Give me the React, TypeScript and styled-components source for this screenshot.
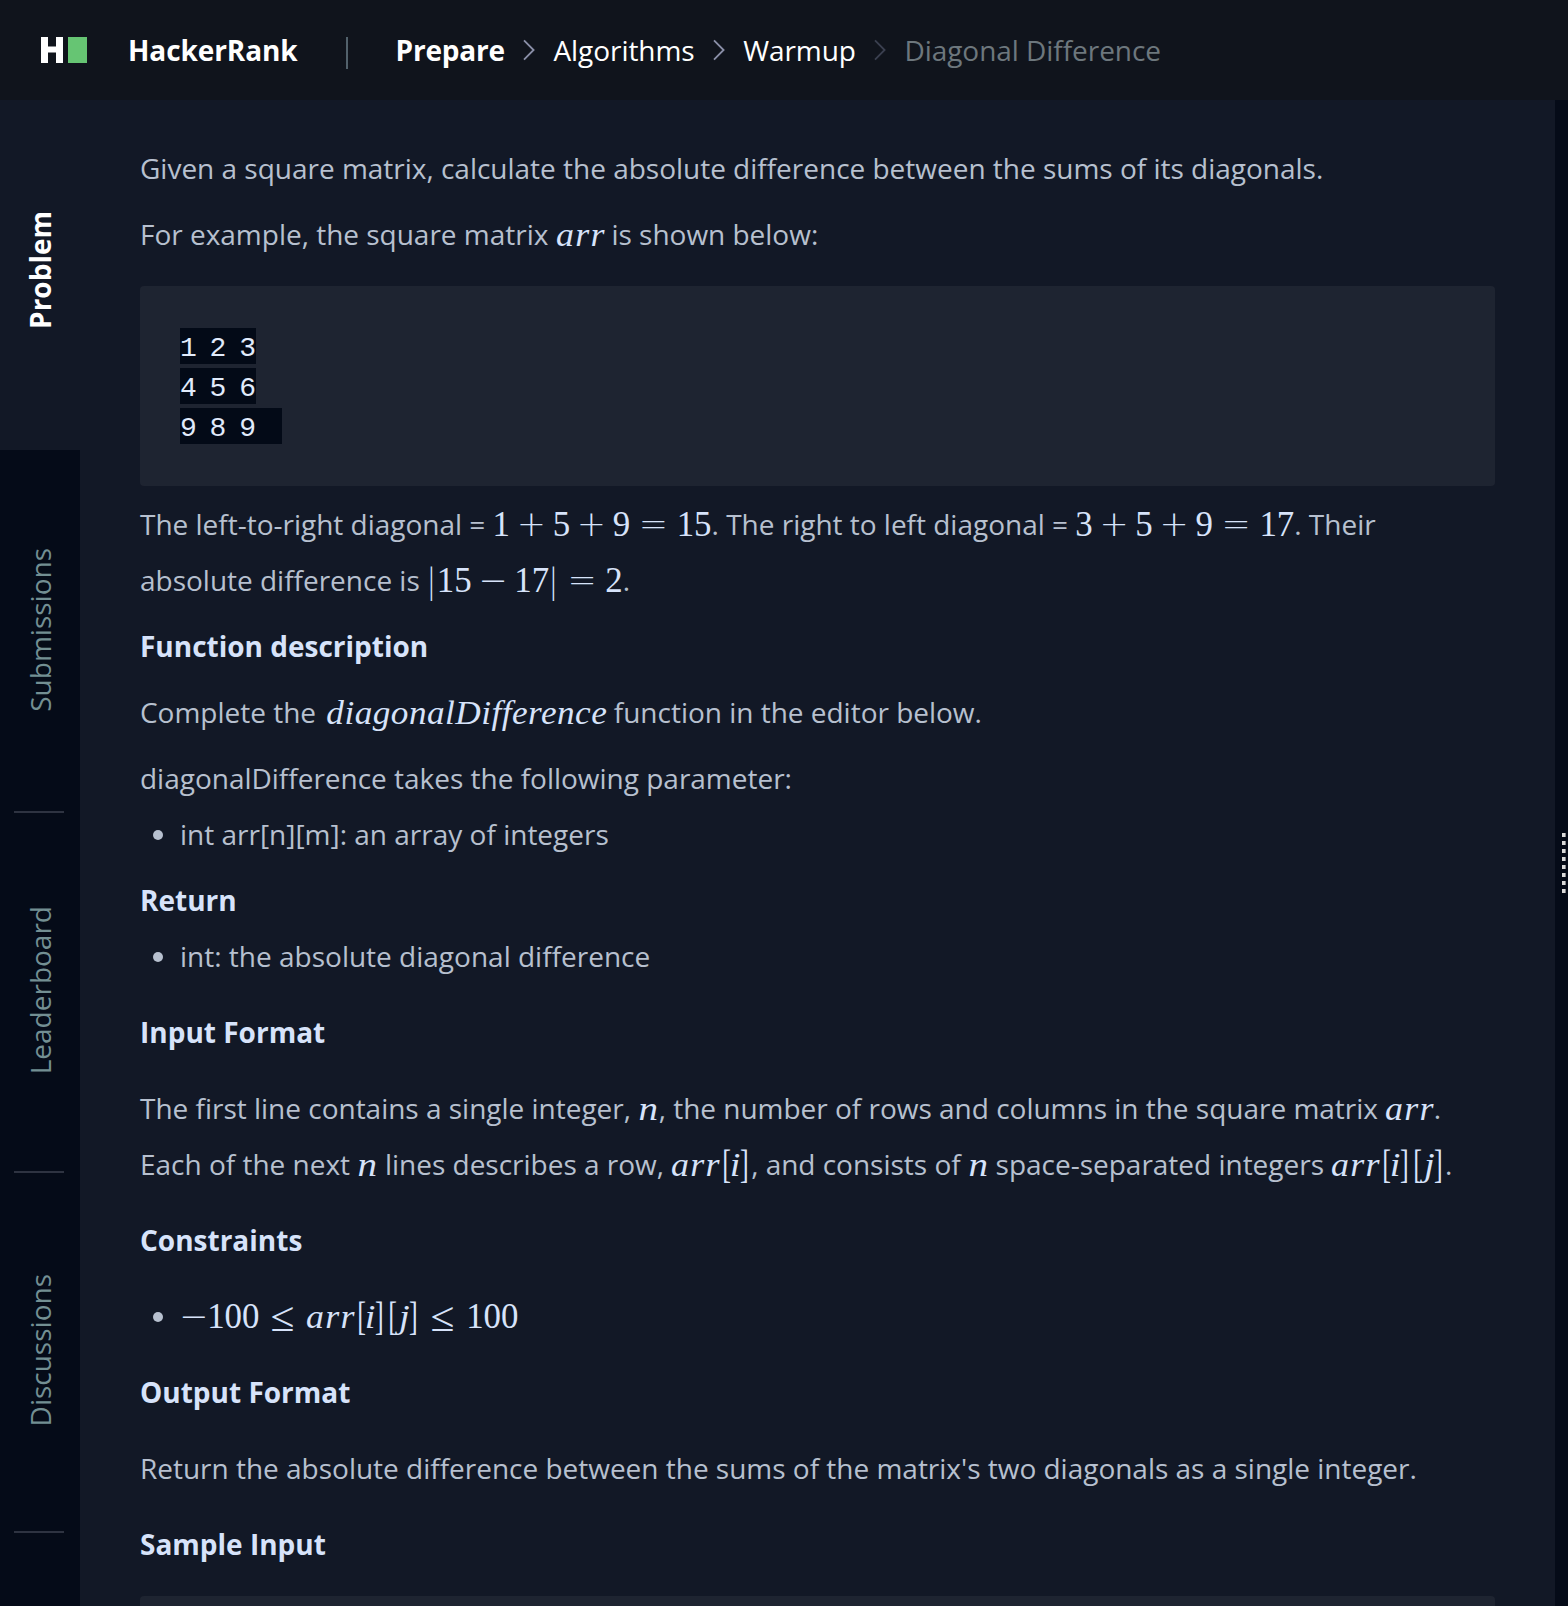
import React from "react";
import styled, { createGlobalStyle, css } from "styled-components";

const GlobalStyle = createGlobalStyle`
  html, body {
    margin: 0;
    padding: 0;
    background: #121826;
  }
  body {
    font-family: "Open Sans", "Noto Sans", sans-serif;
    font-size: 28px;
    color: #b7c0cf;
  }
`;

const Page = styled.div`
  display: flex;
  flex-direction: column;
  height: 1606px;
  overflow: hidden;
`;

const Header = styled.header`
  display: flex;
  align-items: center;
  height: 100px;
  flex: none;
  padding-left: 41px;
  background: #10141c;
  color: #fff;
`;

const Logo = styled.svg`
  display: block;
  width: 46px;
  height: 26px;
`;

const Brand = styled.span`
  margin-left: 41px;
  line-height: 40px;
  font-weight: 700;
  letter-spacing: -0.1px;
`;

const Divider = styled.span`
  width: 2px;
  height: 32px;
  margin: 6px 48px 0 48px;
  background: #52616b;
`;

const Crumbs = styled.nav`
  display: flex;
  align-items: center;
  line-height: 40px;
`;

const Crumb = styled.span<{ $strong?: boolean; $dim?: boolean }>`
  font-weight: ${(p) => (p.$strong ? 700 : 400)};
  letter-spacing: ${(p) => (p.$strong ? -0.2 : -0.05)}px;
  color: ${(p) => (p.$dim ? "#6d777d" : "#fff")};
`;

const Chevron = styled.svg<{ $dim?: boolean }>`
  display: block;
  width: 12px;
  height: 22px;
  margin: 0 18.5px 0 18px;
  fill: none;
  stroke: ${(p) => (p.$dim ? "#3b4050" : "#8b90a8")};
  stroke-width: 1.8;
`;

const Body = styled.div`
  display: flex;
  flex: 1;
  min-height: 0;
`;

const Sidebar = styled.aside`
  display: flex;
  flex-direction: column;
  flex: none;
  width: 80px;
  background: #050b18;
`;

const Tab = styled.div<{ $active?: boolean; $height: number; $shift: number }>`
  display: flex;
  align-items: center;
  justify-content: center;
  flex: none;
  box-sizing: border-box;
  height: ${(p) => p.$height}px;
  padding-bottom: ${(p) => p.$shift}px;
  background: ${(p) => (p.$active ? "#121826" : "transparent")};
  color: ${(p) => (p.$active ? "#fff" : "#738f93")};
  font-weight: ${(p) => (p.$active ? 700 : 400)};
`;

const TabLabel = styled.span`
  writing-mode: vertical-rl;
  transform: rotate(180deg);
  line-height: 40px;
`;

const Separator = styled.div`
  flex: none;
  width: 50px;
  height: 2px;
  margin-left: 13.5px;
  background: #2e3341;
`;

const Statement = styled.main`
  flex: 1;
  min-width: 0;
  padding: 40px 60px 0;
  background: #121826;
  line-height: 56px;
`;

const Paragraph = styled.p<{ $gap?: number }>`
  margin: 0 0 ${(p) => p.$gap ?? 10}px;
  letter-spacing: -0.012px;
`;

const Heading = styled.h3<{ $gap?: number }>`
  margin: 0 0 ${(p) => p.$gap ?? 20}px;
  font-size: 28px;
  font-weight: 700;
  color: #d7e3fa;
`;

const List = styled.ul<{ $gap?: number; $pull?: boolean }>`
  margin: ${(p) => (p.$pull ? "-10px" : "0")} 0 ${(p) => p.$gap ?? 20}px;
  padding: 0;
  list-style: none;
`;

const Item = styled.li`
  display: flex;
  align-items: center;
  height: 56px;
  &::before {
    content: "";
    flex: none;
    width: 10px;
    height: 10px;
    margin: 2px 17px 0 13px;
    border-radius: 50%;
    background: #b7c0cf;
  }
`;

const Pre = styled.div`
  display: flex;
  flex-direction: column;
  align-items: flex-start;
  gap: 4px;
  margin: 24px 0 10px;
  padding: 42px 40px;
  border-radius: 4px;
  background: #1e2431;
`;

const CodeLine = styled.code<{ $width: number }>`
  width: ${(p) => p.$width}px;
  height: 36px;
  background: #030a17;
  color: #e1ebfb;
  font-family: "Liberation Mono", monospace;
  font-size: 28px;
  line-height: 42px;
  word-spacing: -4px;
  white-space: pre;
`;

const Formula = styled.span`
  position: relative;
  top: 1px;
  font-family: "Liberation Serif", serif;
  font-size: 34.9px;
  line-height: 0;
  letter-spacing: 0;
  color: #d7e3fa;
  white-space: nowrap;
`;

const Num = styled.span``;

const symbol = css`
  display: inline-block;
  line-height: 1;
  text-align: center;
`;

const Var = styled.span<{ $width: number; $stretch: number; $inset: number; $track: number }>`
  display: inline-block;
  box-sizing: border-box;
  width: ${(p) => p.$width}em;
  padding-left: ${(p) => p.$inset}em;
  line-height: 1;
  font-style: italic;
  font-variant-ligatures: none;
  letter-spacing: ${(p) => p.$track}em;
  transform: scale(${(p) => p.$stretch}, 0.98);
  transform-origin: 0 80%;
`;

const Op = styled.span<{ $space: number }>`
  ${symbol}
  width: 0.778em;
  margin: 0 ${(p) => p.$space}em;
  font-family: "DejaVu Sans", sans-serif;
  font-weight: 200;
  text-indent: -0.03em;
`;

const LessEqual = styled.span`
  ${symbol}
  width: 0.778em;
  margin: 0 0.278em;
  transform: translateY(0.02em) scale(1.25, 1.2);
`;

const Fence = styled.span<{ $nudge: number; $tall: number }>`
  ${symbol}
  width: 0.278em;
  text-indent: -0.03em;
  transform: translateX(${(p) => p.$nudge}em) scale(0.75, ${(p) => p.$tall});
`;

// Advance, horizontal stretch, left inset and tracking of the variables, in ems.
const GLYPHS: Record<string, [number, number, number, number]> = {
  arr: [1.39, 1.03, 0, 0.035],
  n: [0.585, 1.12, 0.01, 0],
  i: [0.345, 1.1, 0.02, 0],
  j: [0.412, 1.1, 0.08, 0],
  diagonalDifference: [8.03, 1.01, 0.01, 0.013],
};

const NUDGE: Record<string, number> = { "[": 0.05, "]": -0.04, "|": 0 };

// Spaces each token of a formula by its class: operator, relation, fence, number or variable.
function M({ children }: { children: string }) {
  const tokens = children.match(/[a-zA-Z]+|\d+|[^\s]/g) ?? [];
  return (
    <Formula>
      {tokens.map((t, i) => {
        if (/\d/.test(t)) return <Num key={i}>{t}</Num>;
        if (/[a-z]/i.test(t)) {
          const [width, stretch, inset, track] = GLYPHS[t];
          return <Var key={i} $width={width} $stretch={stretch} $inset={inset} $track={track}>{t}</Var>;
        }
        if (t in NUDGE) return <Fence key={i} $nudge={NUDGE[t]} $tall={t === "|" ? 1.08 : 1.16}>{t}</Fence>;
        if (t === "≤") return <LessEqual key={i}>{t}</LessEqual>;
        const space = t === "=" ? 0.278 : i === 0 ? 0 : 0.222;
        return <Op key={i} $space={space}>{t}</Op>;
      })}
    </Formula>
  );
}

const Lead = styled.span`
  margin-left: 3px;
`;

const Splitter = styled.div`
  display: flex;
  flex-direction: column;
  align-items: flex-end;
  gap: 4px;
  flex: none;
  box-sizing: border-box;
  width: 13px;
  padding: 733px 2px 0 0;
  background: #050b18;
`;

const Dot = styled.span`
  width: 4px;
  height: 4px;
  background: linear-gradient(90deg, #d9d9d9 75%, #85868b 75%);
`;

function Arrow({ dim }: { dim?: boolean }) {
  return (
    <Chevron $dim={dim} viewBox="0 0 12 22">
      <path d="M1 1.3 L10.6 11 L1 20.7" />
    </Chevron>
  );
}

export default function App() {
  return (
    <Page>
      <GlobalStyle />
      <Header>
        <Logo viewBox="0 0 46 26">
          <path fill="#fff" d="M0 0h7v9.5h8V0h7v26h-7V15.500H7V26H0z" />
          <rect x="27" width="19" height="26" fill="#66c573" />
        </Logo>
        <Brand>HackerRank</Brand>
        <Divider />
        <Crumbs>
          <Crumb $strong>Prepare</Crumb>
          <Arrow />
          <Crumb>Algorithms</Crumb>
          <Arrow />
          <Crumb>Warmup</Crumb>
          <Arrow dim />
          <Crumb $dim>Diagonal Difference</Crumb>
        </Crumbs>
      </Header>
      <Body>
        <Sidebar>
          <Tab $active $height={350} $shift={10}><TabLabel>Problem</TabLabel></Tab>
          <Tab $height={361} $shift={1}><TabLabel>Submissions</TabLabel></Tab>
          <Separator />
          <Tab $height={358} $shift={4}><TabLabel>Leaderboard</TabLabel></Tab>
          <Separator />
          <Tab $height={358} $shift={4}><TabLabel>Discussions</TabLabel></Tab>
          <Separator />
        </Sidebar>
        <Statement>
          <Paragraph>Given a square matrix, calculate the absolute difference between the sums of its diagonals.</Paragraph>
          <Paragraph $gap={0}>For example, the square matrix <M>arr</M> is shown below:</Paragraph>
          <Pre>
            <CodeLine $width={76}>1 2 3</CodeLine>
            <CodeLine $width={76}>4 5 6</CodeLine>
            <CodeLine $width={102}>9 8 9  </CodeLine>
          </Pre>
          <Paragraph>
            The left-to-right diagonal = <M>1 + 5 + 9 = 15</M>. The right to left diagonal = <M>3 + 5 + 9 = 17</M>. Their
            <br />
            absolute difference is <M>|15 − 17| = 2</M>.
          </Paragraph>
          <Heading $gap={10}>Function description</Heading>
          <Paragraph>
            Complete the <Lead><M>diagonalDifference</M></Lead> function in the editor below.
          </Paragraph>
          <Paragraph>diagonalDifference takes the following parameter:</Paragraph>
          <List $pull $gap={10}><Item><span>int arr[n][m]: an array of integers</span></Item></List>
          <Heading $gap={0}>Return</Heading>
          <List><Item><span>int: the absolute diagonal difference</span></Item></List>
          <Heading>Input Format</Heading>
          <Paragraph $gap={20}>
            The first line contains a single integer, <M>n</M>, the number of rows and columns in the square matrix <M>arr</M>.
            <br />
            Each of the next <M>n</M> lines describes a row, <M>arr[i]</M>, and consists of <M>n</M> space-separated integers <M>arr[i][j]</M>.
          </Paragraph>
          <Heading>Constraints</Heading>
          <List><Item><span><M>−100 ≤ arr[i][j] ≤ 100</M></span></Item></List>
          <Heading>Output Format</Heading>
          <Paragraph $gap={20}>Return the absolute difference between the sums of the matrix's two diagonals as a single integer.</Paragraph>
          <Heading $gap={0}>Sample Input</Heading>
          <Pre />
        </Statement>
        <Splitter>
          {Array.from({ length: 8 }, (_, i) => <Dot key={i} />)}
        </Splitter>
      </Body>
    </Page>
  );
}
